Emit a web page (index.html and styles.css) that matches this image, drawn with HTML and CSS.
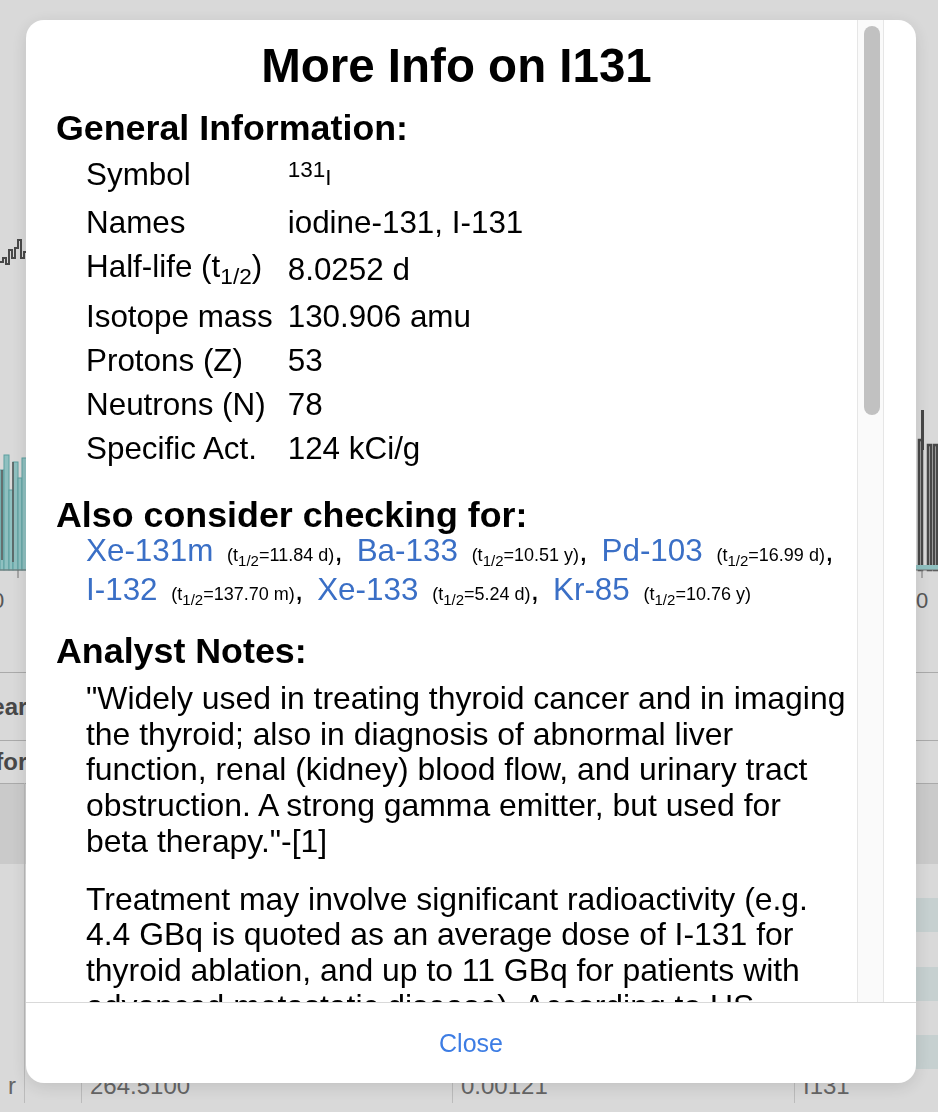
FILE: index.html
```html
<!DOCTYPE html>
<html lang="en">
<head>
<meta charset="utf-8">
<title>More Info on I131</title>
<link rel="stylesheet" href="styles.css">
</head>
<body>
<div class="app">
  <svg class="chart" width="938" height="630" viewBox="0 0 938 630">
    <path d="M0,262 h3 v-4 h3 v6 h3 v-14 h3 v8 h3 v-10 h3 v-8 h3 v18 h3 v-6 h6 v10 h8" fill="none" stroke="#555" stroke-width="2"/>
    <g fill="#a9e2e2" stroke="#6cbcbc" stroke-width="1">
      <rect x="0" y="470" width="4" height="100"/>
      <rect x="4" y="455" width="5" height="115"/>
      <rect x="9" y="490" width="4" height="80"/>
      <rect x="13" y="462" width="5" height="108"/>
      <rect x="18" y="478" width="4" height="92"/>
      <rect x="22" y="458" width="6" height="112"/>
    </g>
    <path d="M2,470 v90 M13,462 v100" stroke="#666" stroke-width="1.5"/>
    <g fill="none" stroke="#555" stroke-width="2.5">
      <rect x="919" y="440" width="3" height="130"/>
      <rect x="928" y="445" width="3" height="125"/>
      <rect x="934" y="445" width="3" height="125"/>
    </g>
    <rect x="921" y="410" width="3" height="40" fill="#555"/>
    <rect x="916" y="565" width="22" height="5" fill="#a9e2e2"/>
    <line x1="0" y1="570" x2="938" y2="570" stroke="#888" stroke-width="1"/>
    <line x1="18" y1="570" x2="18" y2="578" stroke="#888" stroke-width="1"/>
    <line x1="922" y1="570" x2="922" y2="578" stroke="#888" stroke-width="1"/>
    <text x="-8" y="608" class="tick">0</text>
    <text x="916" y="608" class="tick">0</text>
  </svg>
  <div class="sect-head"><span>Nearest Peaks</span></div>
  <div class="sect-head second"><span>Information</span></div>
  <table class="peaks">
    <thead>
      <tr><th></th><th></th><th></th><th></th><th></th></tr>
    </thead>
    <tbody>
      <tr><td></td><td>|</td><td></td><td></td><td></td></tr>
      <tr class="alt"><td></td><td></td><td></td><td></td><td></td></tr>
      <tr><td></td><td></td><td></td><td></td><td></td></tr>
      <tr class="alt"><td></td><td></td><td></td><td></td><td></td></tr>
      <tr><td></td><td></td><td></td><td></td><td></td></tr>
      <tr class="alt"><td></td><td></td><td></td><td></td><td></td></tr>
      <tr><td>r</td><td></td><td>264.5100</td><td>0.00121</td><td>I131</td></tr>
    </tbody>
  </table>
</div>

<div class="overlay">
  <div class="modal">
    <div class="modal-body">
      <div class="scroll-content">
        <h1 class="title">More Info on I131</h1>

        <h2 class="sect">General Information:</h2>
        <table class="info">
          <tr class="row-sym"><td>Symbol</td><td><span class="sym"><sup>131</sup>I</span></td></tr>
          <tr><td>Names</td><td>iodine-131, I-131</td></tr>
          <tr class="row-half"><td>Half-life (t<sub>1/2</sub>)</td><td>8.0252 d</td></tr>
          <tr><td>Isotope mass</td><td>130.906 amu</td></tr>
          <tr><td>Protons (Z)</td><td>53</td></tr>
          <tr><td>Neutrons (N)</td><td>78</td></tr>
          <tr><td>Specific Act.</td><td>124 kCi/g</td></tr>
        </table>

        <h2 class="sect">Also consider checking for:</h2>
        <p class="links"><a href="#">Xe-131m</a> <span class="hl">(t<sub>1/2</sub>=11.84 d)</span>, <a href="#">Ba-133</a> <span class="hl">(t<sub>1/2</sub>=10.51 y)</span>, <a href="#">Pd-103</a> <span class="hl">(t<sub>1/2</sub>=16.99 d)</span>, <a href="#">I-132</a> <span class="hl">(t<sub>1/2</sub>=137.70 m)</span>, <a href="#">Xe-133</a> <span class="hl">(t<sub>1/2</sub>=5.24 d)</span>, <a href="#">Kr-85</a> <span class="hl">(t<sub>1/2</sub>=10.76 y)</span></p>

        <h2 class="sect">Analyst Notes:</h2>
        <div class="notes">
          <p>"Widely used in treating thyroid cancer and in imaging the thyroid; also in diagnosis of abnormal liver function, renal (kidney) blood flow, and urinary tract obstruction. A strong gamma emitter, but used for beta therapy."-[1]</p>
          <p>Treatment may involve significant radioactivity (e.g. 4.4 GBq is quoted as an average dose of I-131 for thyroid ablation, and up to 11 GBq for patients with advanced metastatic disease). According to US regulations, patients may be released once the retained activity is below about 1.2 GBq, so recently treated patients are commonly encountered outside of the hospital.</p>
        </div>
      </div>
      <div class="scrollbar" aria-hidden="true">
        <div class="thumb"></div>
      </div>
    </div>
    <div class="modal-footer">
      <button class="close" type="button">Close</button>
    </div>
  </div>
</div>
</body>
</html>
```

FILE: styles.css
```css
html, body {
  margin: 0;
  padding: 0;
}

body {
  width: 938px;
  height: 1112px;
  overflow: hidden;
  background: #ffffff;
  font-family: "Liberation Sans", Arial, Helvetica, sans-serif;
  color: #000;
}

/* ---------- background application ---------- */
.app {
  display: flex;
  flex-direction: column;
}

.chart {
  display: block;
}

.chart .tick {
  font-family: "Liberation Sans", Arial, sans-serif;
  font-size: 22px;
  fill: #666;
}

.sect-head {
  height: 67px;
  border-top: 1px solid #c8c8c8;
  display: flex;
  align-items: center;
  font-weight: bold;
  font-size: 24px;
  color: #555;
  margin-top: 42px;
}

.sect-head span {
  margin-left: -26px;
}

.sect-head.second {
  margin-top: 0;
  height: 42px;
}

.peaks {
  border-collapse: collapse;
  width: 938px;
  font-size: 24px;
  color: #777;
  border-top: 1px solid #c8c8c8;
}

.peaks th {
  height: 80px;
  background: #eeeeee;
  padding: 0 8px;
  border-left: 1px solid #dcdcdc;
}

.peaks td {
  height: 34.2px;
  padding: 0 8px;
  border-left: 1px solid #dcdcdc;
}

.peaks th:first-child,
.peaks td:first-child {
  width: 4px;
  border-left: none;
}

.peaks th:nth-child(2),
.peaks td:nth-child(2) {
  width: 40px;
}

.peaks th:nth-child(3),
.peaks td:nth-child(3) {
  width: 354px;
}

.peaks th:nth-child(4),
.peaks td:nth-child(4) {
  width: 325px;
}

.peaks tr.alt td:nth-child(n+3) {
  background: #e9f5f5;
}

/* ---------- overlay + modal ---------- */
.overlay {
  position: fixed;
  inset: 0;
  background: rgba(0, 0, 0, 0.15);
  display: flex;
  padding: 20px 22px 29px 26px;
}

.modal {
  flex: 1;
  background: #ffffff;
  border-radius: 18px;
  box-shadow: 0 4px 18px rgba(0, 0, 0, 0.12);
  display: flex;
  flex-direction: column;
  overflow: hidden;
}

.modal-body {
  flex: 1;
  min-height: 0;
  display: flex;
  margin-right: 32px;
}

.scroll-content {
  flex: 1;
  min-width: 0;
  overflow: hidden;
  padding-left: 30px;
}

.scrollbar {
  flex: none;
  width: 16px;
  padding: 6px 3px 0 6px;
  background: #fafafa;
  border-left: 1px solid #e6e6e6;
  border-right: 1px solid #e6e6e6;
}

.thumb {
  height: 389px;
  background: #c1c1c1;
  border-radius: 8px;
}

.title {
  margin: 19px 0 0 0;
  text-align: center;
  font-size: 47.5px;
  font-weight: bold;
  line-height: 1.15;
}

.sect {
  margin: 14px 0 0 0;
  font-size: 35.8px;
  font-weight: bold;
  line-height: 1.15;
}

.info {
  margin-left: 30px;
  border-spacing: 0;
  font-size: 31.4px;
}

.info td {
  padding: 4px 0;
  vertical-align: middle;
}

.info td:first-child {
  padding-right: 15px;
}

.info tr.row-sym td {
  padding-top: 8px;
  padding-bottom: 8px;
}

.info tr.row-half td {
  padding-top: 4px;
}

.info sub {
  font-size: 0.72em;
}

.sym {
  font-size: 22.5px;
}

.sym sup {
  font-size: 1em;
}

.info + .sect {
  margin-top: 24px;
}

.links {
  margin: -5px 0 0 30px;
  font-size: 31.4px;
  line-height: 39px;
  word-spacing: 5px;
}

.links a {
  color: #3a6fc6;
  text-decoration: none;
}

.hl {
  font-size: 18px;
  line-height: 1;
  word-spacing: 0;
}

.hl sub {
  line-height: 0;
}

.links + .sect {
  margin-top: 22px;
}

.notes {
  margin-left: 30px;
  padding-right: 9px;
  font-size: 31.9px;
  line-height: 35.75px;
}

.notes p {
  margin: 9px 0 22px 0;
}

.modal-footer {
  height: 80px;
  flex: none;
  border-top: 1px solid #d9d9d9;
  display: flex;
  align-items: center;
  justify-content: center;
}

.close {
  border: none;
  background: transparent;
  font-family: "Liberation Sans", Arial, sans-serif;
  font-size: 25px;
  color: #3d7de4;
  padding: 6px 14px;
}
```
